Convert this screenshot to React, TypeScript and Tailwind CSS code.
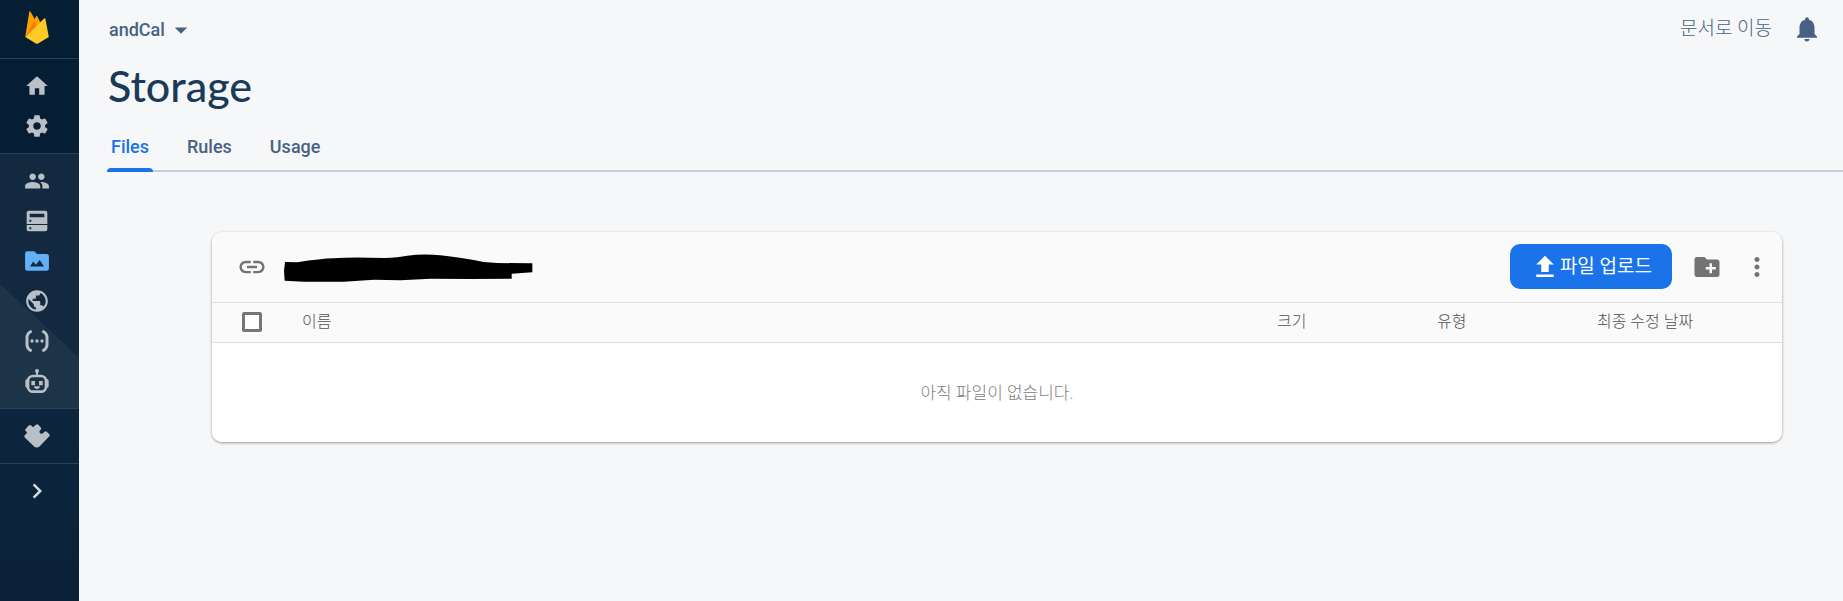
import type { ReactNode } from 'react'
import {
  MdArrowDropDown,
  MdChevronRight,
  MdCreateNewFolder,
  MdFileUpload,
  MdHome,
  MdLink,
  MdMoreVert,
  MdNotifications,
  MdPeople,
  MdPublic,
} from 'react-icons/md'

interface NavItem {
  id: string
  label: string
  icon: ReactNode
  active?: boolean
}

const iconClass = 'h-[26px] w-[26px]'
const largeIconClass = 'h-[30px] w-[30px]'

function FirebaseLogo() {
  return (
    <svg viewBox="0 0 70 98" className="h-[33px] w-6" aria-hidden="true">
      <path d="M0 77 12 3q1-4 4-1l12 22 6 10z" fill="#ffa000" />
      <path d="m24 32 8-16q2-3 4 0l10 20-14 14z" fill="#ffa000" />
      <path d="m0 77 27-48 9 17z" fill="#f57c00" />
      <path d="m0 77 56-55q3-2 4 1l10 54-33 20q-2 1-4 0z" fill="#ffca28" />
    </svg>
  )
}

function SettingsIcon() {
  return (
    <svg viewBox="0 0 24 24" fill="currentColor" className={iconClass} aria-hidden="true">
      <path d="M19.43 12.98c.04-.32.07-.64.07-.98s-.03-.66-.07-.98l2.11-1.65c.19-.15.24-.42.12-.64l-2-3.46c-.12-.22-.39-.3-.61-.22l-2.49 1c-.52-.4-1.08-.73-1.69-.98l-.38-2.65C14.46 2.18 14.25 2 14 2h-4c-.25 0-.46.18-.49.42l-.38 2.65c-.61.25-1.17.59-1.69.98l-2.49-1c-.23-.09-.49 0-.61.22l-2 3.46c-.13.22-.07.49.12.64l2.11 1.65c-.04.32-.07.65-.07.98s.03.66.07.98l-2.11 1.65c-.19.15-.24.42-.12.64l2 3.46c.12.22.39.3.61.22l2.49-1c.52.4 1.08.73 1.69.98l.38 2.65c.03.24.24.42.49.42h4c.25 0 .46-.18.49-.42l.38-2.65c.61-.25 1.17-.59 1.69-.98l2.49 1c.23.09.49 0 .61-.22l2-3.46c.12-.22.07-.49-.12-.64l-2.11-1.65zM12 15.5c-1.93 0-3.5-1.57-3.5-3.5s1.57-3.5 3.5-3.5 3.5 1.57 3.5 3.5-1.57 3.5-3.5 3.5z" />
    </svg>
  )
}

function DatabaseIcon() {
  return (
    <svg viewBox="0 0 78 78" fill="currentColor" fillRule="evenodd" className={iconClass} aria-hidden="true">
      <path d="M14 8h50q6 0 6 6v34H8V14q0-6 6-6zm3 9v11h44V17zm-1 18v6h6v-6z" />
      <path d="M8 51h62v13q0 6-6 6H14q-6 0-6-6zm8 7v6h6v-6z" />
    </svg>
  )
}

function StorageIcon() {
  return (
    <svg viewBox="0 0 24 24" fill="currentColor" fillRule="evenodd" className={iconClass} aria-hidden="true">
      <path d="M3 3h6.500l2.500 2.500h9a2 2 0 0 1 2 2V19a2 2 0 0 1-2 2H3a2 2 0 0 1-2-2V5a2 2 0 0 1 2-2zm2.500 14h13l-4-6-3.500 4.500-2.500-3z" />
    </svg>
  )
}

function FunctionsIcon() {
  return (
    <svg viewBox="0 0 78 78" fill="currentColor" className={iconClass} aria-hidden="true">
      <path
        d="M23 9C13 14 9 19 9 28v22c0 9 4 14 14 19M55 9c10 5 14 10 14 19v22c0 9-4 14-14 19"
        fill="none"
        stroke="currentColor"
        strokeWidth="9"
      />
      <circle cx="24" cy="39" r="5" />
      <circle cx="39" cy="39" r="5" />
      <circle cx="54" cy="39" r="5" />
    </svg>
  )
}

function RobotIcon() {
  return (
    <svg viewBox="0 0 78 78" fill="currentColor" className={iconClass} aria-hidden="true">
      <circle cx="39" cy="9" r="6" />
      <path d="M36 12h6v12h-6z" />
      <rect x="12" y="24" width="54" height="47" rx="15" fill="none" stroke="currentColor" strokeWidth="8" />
      <path d="M4 38q0-5 6-5v27q-6 0-6-5zM74 38q0-5-6-5v27q6 0 6-5zM22 39h11v13H22zM45 39h11v13H45zM30 55h18q-1 8-9 8t-9-8z" />
    </svg>
  )
}

function ExtensionsIcon() {
  return (
    <svg viewBox="0 0 72 72" fill="currentColor" className={iconClass} aria-hidden="true">
      <path d="M4 17 13 7q3-3 7 0l5 5 8-7q4-3 8 1l6 7q2 3-1 6-5 4-2 9 4 4 9 0l4-4q3-3 6 0l7 7q3 3 0 6L43 65q-8 6-15 0L2 40q-2-3 0-6l5-5q2-3 0-5-6-4-3-7z" />
    </svg>
  )
}

const projectItems: NavItem[] = [
  { id: 'home', label: 'Home', icon: <MdHome className={iconClass} /> },
  { id: 'settings', label: 'Settings', icon: <SettingsIcon /> },
]

const productItems: NavItem[] = [
  { id: 'auth', label: 'Authentication', icon: <MdPeople className={iconClass} /> },
  { id: 'database', label: 'Database', icon: <DatabaseIcon /> },
  { id: 'storage', label: 'Storage', icon: <StorageIcon />, active: true },
  { id: 'hosting', label: 'Hosting', icon: <MdPublic className={iconClass} /> },
  { id: 'functions', label: 'Functions', icon: <FunctionsIcon /> },
  { id: 'ml', label: 'Machine Learning', icon: <RobotIcon /> },
]

const tabs = ['Files', 'Rules', 'Usage']

function NavGroup({ items }: { items: NavItem[] }) {
  return (
    <ul className="py-[7px]">
      {items.map((item) => (
        <li key={item.id}>
          <a
            href={`#${item.id}`}
            aria-label={item.label}
            className={`flex h-10 items-center justify-center pr-[5px] ${item.active ? 'text-[#61b0f8]' : 'text-[#b9bfc7]'}`}
          >
            {item.icon}
          </a>
        </li>
      ))}
    </ul>
  )
}

function Sidebar() {
  return (
    <nav className="w-[79px] shrink-0 bg-linear-to-b from-[#14304a] to-[#0a2137]">
      <div className="bg-[#051e34]">
        <a href="#overview" aria-label="Firebase" className="flex h-[58px] items-center justify-center pr-[5px] pb-1">
          <FirebaseLogo />
        </a>
        <div className="border-y border-[#27425d]">
          <NavGroup items={projectItems} />
        </div>
      </div>
      <div className="border-b border-[#27425d] bg-[#12293f] bg-[linear-gradient(223deg,transparent_149px,#1d3347_149px)]">
        <NavGroup items={productItems} />
      </div>
      <div className="border-b border-[#27425d]">
        <NavGroup items={[{ id: 'extensions', label: 'Extensions', icon: <ExtensionsIcon /> }]} />
      </div>
      <div className="py-[7px]">
        <button type="button" aria-label="Expand" className="flex h-10 w-full items-center justify-center pr-[5px] text-[#d5dae0]">
          <MdChevronRight className={largeIconClass} />
        </button>
      </div>
    </nav>
  )
}

function Header() {
  return (
    <header className="flex h-[58px] items-center justify-between pl-[30px] text-[#476282]">
      <button type="button" className="flex items-center gap-px pt-0.5 text-[18px] leading-6 font-medium">
        andCal
        <MdArrowDropDown className={largeIconClass} />
      </button>
      <div className="flex items-center gap-5 pr-[21px]">
        <a href="#docs" className="text-[19px] leading-6 font-light">문서로 이동</a>
        <button type="button" aria-label="Notifications">
          <MdNotifications className={largeIconClass} />
        </button>
      </div>
    </header>
  )
}

function Toolbar() {
  return (
    <div className="flex items-center justify-between border-b border-[#dedede] bg-[#fafafa] pt-3 pr-[10px] pb-[13px] pl-[25px] text-[#737373]">
      <div className="flex items-center gap-[17px]">
        <button type="button" aria-label="Copy link">
          <MdLink className={largeIconClass} />
        </button>
        <svg viewBox="0 0 748 84" className="mt-0.5 h-7 w-[249px]" aria-hidden="true">
          <path
            d="M3 24 40 25Q110 14 150 13 200 8 300 12 345 10 370 5 420-1 470 4 530 11 600 24L640 27 746 28V55L684 59V74L560 75 440 74 350 79 270 77 180 83 60 83 2 80 0 50z"
            fill="#000"
          />
        </svg>
      </div>
      <div className="flex items-center gap-5">
        <button type="button" className="flex h-[45px] items-center rounded-[10px] bg-[#1a73e8] px-5 text-[19px] leading-6 text-white">
          <MdFileUpload className={largeIconClass} />
          파일 업로드
        </button>
        <button type="button" aria-label="Create folder">
          <MdCreateNewFolder className={largeIconClass} />
        </button>
        <button type="button" aria-label="More">
          <MdMoreVert className={largeIconClass} />
        </button>
      </div>
    </div>
  )
}

function FileTable() {
  return (
    <table className="w-full table-fixed text-left">
      <thead>
        <tr className="h-[39px] border-b border-[#dedede] bg-[#fafafa] text-[16px] leading-5 text-[#4f4f4f]">
          <th className="w-[90px] pl-[30px]">
            <input
              type="checkbox"
              aria-label="Select all files"
              className="block h-5 w-5 appearance-none rounded-[2px] border-3 border-[#757575] bg-white"
            />
          </th>
          <th className="font-light">이름</th>
          <th className="w-40 font-light">크기</th>
          <th className="w-40 font-light">유형</th>
          <th className="w-[185px] font-light">최종 수정 날짜</th>
        </tr>
      </thead>
      <tbody>
        <tr className="h-[100px] bg-white">
          <td colSpan={5} className="pt-0.5 text-center text-[17px] leading-6 font-light text-[#808080]">
            아직 파일이 없습니다.
          </td>
        </tr>
      </tbody>
    </table>
  )
}

export default function App() {
  return (
    <div className="flex min-h-screen bg-[#f6f7f9] font-[Roboto,'Noto_Sans_CJK_KR',sans-serif]">
      <Sidebar />
      <main className="min-w-0 flex-1">
        <Header />
        <h1 className="pl-[29px] font-[Lato,sans-serif] text-[43px] leading-14 font-medium text-[#1b3a57]">Storage</h1>
        <div className="mt-3 ml-7 flex gap-[30px] border-b-2 border-[#c2cfe0]">
          {tabs.map((tab) => (
            <a
              key={tab}
              href={`#${tab.toLowerCase()}`}
              className={`-mb-0.5 flex h-[46px] flex-col justify-between px-1 pt-[5px] text-[18px] leading-8 font-medium ${
                tab === 'Files' ? 'text-[#1a73e8]' : 'text-[#476282]'
              }`}
            >
              {tab}
              {tab === 'Files' && <span className="-mx-1 h-1 rounded-t-[4px] bg-[#1a73e8]" />}
            </a>
          ))}
        </div>
        <section className="mt-[60px] mr-[61px] ml-[133px] overflow-hidden rounded-[10px] bg-white shadow-[0_1px_3px_rgba(0,0,0,0.4)]">
          <Toolbar />
          <FileTable />
        </section>
      </main>
    </div>
  )
}
